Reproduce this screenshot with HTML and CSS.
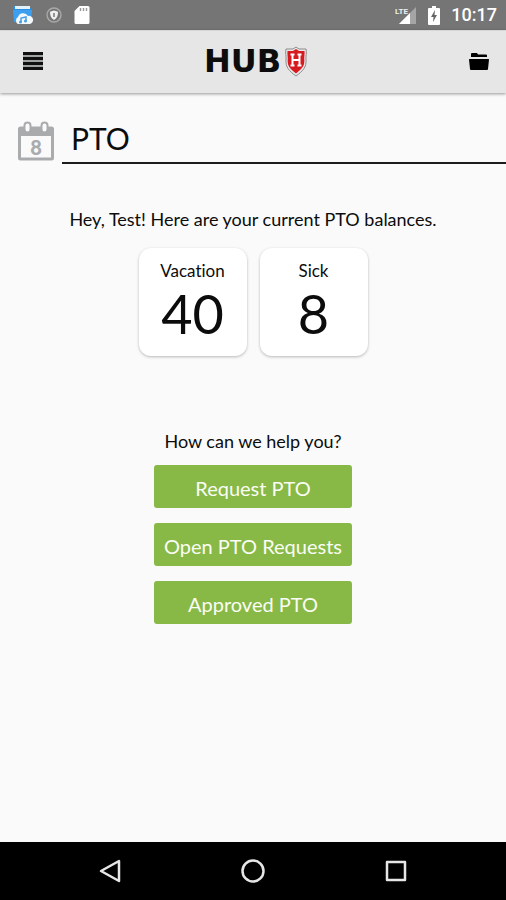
FILE: index.html
```html
<!DOCTYPE html>
<html lang="en">
<head>
<meta charset="utf-8">
<meta name="viewport" content="width=device-width, initial-scale=1">
<title>PTO</title>
<link rel="stylesheet" href="styles.css">
</head>
<body>
<div class="status">
  <div class="status-group">
    <svg width="22" height="20" viewBox="0 0 22 20" aria-hidden="true">
      <path d="M1 2q0-1 1-1h6l2 2h9v13H2z" fill="#2b8fe0"/>
      <path d="M3 1h15v3H3z" fill="#e3f1fb"/>
      <path d="M1 5h19l-1 12H2z" fill="#3d9ff0"/>
      <path d="M6 19a4 4 0 0 1 0-7 5.500 5.500 0 0 1 10-1 4 4 0 0 1 2 8z" fill="#f4f9fd"/>
      <path d="M9 17v-4l5-1v4" fill="none" stroke="#4a9fe4" stroke-width="1.500"/>
      <circle cx="8.500" cy="17" r="1.500" fill="#4a9fe4"/><circle cx="13.500" cy="16" r="1.500" fill="#4a9fe4"/>
    </svg>
    <svg width="16" height="16" viewBox="0 0 16 16" aria-hidden="true">
      <circle cx="8" cy="8" r="7" fill="none" stroke="#a9a9a9" stroke-width="1.400"/>
      <path d="M8 3.500l4 1.300c0 4-1 6.500-4 8.200-3-1.700-4-4.200-4-8.200z" fill="#f0f0f0"/>
      <path d="M8 6v4" stroke="#777" stroke-width="1.500"/>
    </svg>
    <svg width="16" height="20" viewBox="0 0 16 20" aria-hidden="true">
      <path d="M5.500 1H14q1.500 0 1.500 1.500v15Q15.500 19 14 19H2Q.5 19 .5 17.500V6z" fill="#fff"/>
      <path d="M6.500 3v3M9.500 3v3M12.500 3v3" stroke="#999" stroke-width="1.400"/>
    </svg>
  </div>
  <div class="status-group status-right">
    <svg width="22" height="20" viewBox="0 0 22 20" aria-hidden="true">
      <path d="M21 2v17H4z" fill="#a5a5a5"/>
      <path d="M15 8v11H4z" fill="#fff"/>
      <path d="M0 0h13v10H0z" fill="#757575"/>
      <text class="lte" x="0" y="9">LTE</text>
    </svg>
    <svg width="12" height="19" viewBox="0 0 12 19" aria-hidden="true">
      <path d="M4 0h4v2h3q1 0 1 1v15q0 1-1 1H1q-1 0-1-1V3q0-1 1-1h3z" fill="#fff"/>
      <path d="M7 4l-4 7h2.500L5 16l4-7H6.500z" fill="#666"/>
    </svg>
    <span class="clock">10:17</span>
  </div>
</div>
<header class="bar">
  <button class="icon-button" aria-label="Menu">
    <svg width="20" height="18" viewBox="0 0 20 18"><path fill="#a0a5a2" d="M0 0h20v18H0z"/><path d="M0 1.500h20M0 6.500h20M0 11.500h20M0 16.500h20" stroke="#111" stroke-width="3"/></svg>
  </button>
  <div class="brand">
    <span>HUB</span>
    <svg width="24" height="31" viewBox="0 0 24 31" aria-hidden="true">
      <path d="M12 1l3 2h7c1 4-.5 7 0 11 .5 7-3 11-10 16C5 25 1.500 21 2 14c.5-4-1-7 0-11h7z" fill="#e8e8e8" stroke="#8b8b8b"/>
      <path d="M12 3l3 2h5.500c.4 3-.5 6-.2 9 .4 6-2.500 9-8.300 13.500C6.200 23 3.300 20 3.700 14c.3-3-.6-6-.2-9H9z" fill="#d71920"/>
      <path d="M8.500 8v12M15.500 8v12M8.500 14h7M6.500 8.500h4M13.500 8.500h4M6.500 19.500h4M13.500 19.500h4" fill="none" stroke="#fff" stroke-width="2"/>
    </svg>
  </div>
  <button class="icon-button" aria-label="Files">
    <svg width="20" height="18" viewBox="0 0 20 18"><path d="M2 5V2q0-1 1-1h5l1 1.500h8q1 0 1 1V5z"/><path d="M.5 7h19q.5 0 .5.500L19 17q0 1-1 1H2q-1 0-1-1L0 7.500z"/></svg>
  </button>
</header>
<main>
  <div class="title">
    <svg width="38" height="40" viewBox="0 0 38 40" aria-hidden="true">
      <rect x="2.500" y="7" width="33" height="31" rx="1" fill="#fafafa" stroke="#a9abad" stroke-width="3"/>
      <path d="M2 6h34v9H2z" fill="#a9abad"/>
      <rect x="7.500" y="1.500" width="6" height="10" rx="3" fill="#fafafa" stroke="#a9abad" stroke-width="2"/>
      <rect x="24.500" y="1.500" width="6" height="10" rx="3" fill="#fafafa" stroke="#a9abad" stroke-width="2"/>
      <text class="day" x="19" y="34">8</text>
    </svg>
    <h1>PTO</h1>
  </div>
  <p class="greeting">Hey, Test! Here are your current PTO balances.</p>
  <div class="cards">
    <section class="card"><h2>Vacation</h2><p>40</p></section>
    <section class="card"><h2>Sick</h2><p>8</p></section>
  </div>
  <p class="question">How can we help you?</p>
  <div class="actions">
    <button>Request PTO</button>
    <button>Open PTO Requests</button>
    <button>Approved PTO</button>
  </div>
</main>
<nav class="system">
  <button aria-label="Back"><svg width="24" height="26" viewBox="0 0 24 26"><path d="M21 3v20L3 13z"/></svg></button>
  <button aria-label="Home"><svg width="26" height="26" viewBox="0 0 26 26"><circle cx="13" cy="13" r="10.500"/></svg></button>
  <button aria-label="Recent apps"><svg width="24" height="26" viewBox="0 0 24 26"><rect x="3" y="4" width="18" height="18"/></svg></button>
</nav>
</body>
</html>
```
FILE: styles.css
```css
* { box-sizing: border-box; }
body {
  margin: 0;
  min-height: 100vh;
  display: flex;
  flex-direction: column;
  background: #fafafa;
  color: #0c0c0c;
  font-family: Lato, "Liberation Sans", sans-serif;
  font-variant-ligatures: none;
}
h1, h2, p { margin: 0; font-weight: 400; }
button { border: 0; padding: 0; font: inherit; cursor: pointer; }
svg { display: block; flex: none; }
.status {
  display: flex;
  justify-content: space-between;
  height: 30px;
  padding: 0 9px 0 12px;
  background: #757575;
  color: #fff;
}
.status-group { display: flex; align-items: center; gap: 12px; }
.status-right { gap: 11px; }
.clock { font: 500 18px/32px Roboto, sans-serif; }
.lte { font: 700 8px Roboto, sans-serif; fill: #eee; }
.bar {
  display: flex;
  align-items: center;
  justify-content: space-between;
  height: 63px;
  padding: 0 17px 2px 23px;
  background: #e6e6e6;
  border-top: 1px solid #d6d6d6;
  box-shadow: 0 1px 3px #0006;
}
.icon-button { background: none; }
.brand {
  display: flex;
  align-items: center;
  gap: 3px;
  font: 700 32px/30px "DejaVu Sans", sans-serif;
}
main { flex: 1; }
.title {
  display: flex;
  align-items: center;
  gap: 7px;
  padding: 24px 0 0 17px;
}
.title h1 {
  flex: 1;
  padding: 0 9px 2px;
  border-bottom: 2px solid #1c1c1c;
  font-size: 30px;
  line-height: 43px;
}
.day { font: 900 20px Lato, sans-serif; fill: #a9abad; text-anchor: middle; }
.greeting, .question { text-align: center; font-size: 18px; line-height: 24px; }
.greeting { margin-top: 43px; }
.cards {
  display: flex;
  justify-content: center;
  gap: 13px;
  margin-top: 17px;
}
.card {
  width: 108px;
  height: 108px;
  padding-top: 12px;
  border-radius: 12px;
  background: #fff;
  box-shadow: 0 1px 3px #0004;
  text-align: center;
}
.card h2 { font-size: 17px; line-height: 22px; }
.card p { font-size: 54px; line-height: 64px; }
.question { margin-top: 73px; }
.actions {
  display: flex;
  flex-direction: column;
  align-items: center;
  gap: 15px;
  margin-top: 12px;
}
.actions button {
  width: 198px;
  height: 43px;
  padding-top: 3px;
  border-radius: 3px;
  background: #88b946;
  color: #fafdf5;
  font-size: 20px;
}
.system {
  display: flex;
  justify-content: space-between;
  align-items: center;
  height: 58px;
  padding: 0 98px;
  background: #000;
}
.system button { background: none; }
.system svg { fill: none; stroke: #e6e6e6; stroke-width: 2.5px; stroke-linejoin: round; }
```
